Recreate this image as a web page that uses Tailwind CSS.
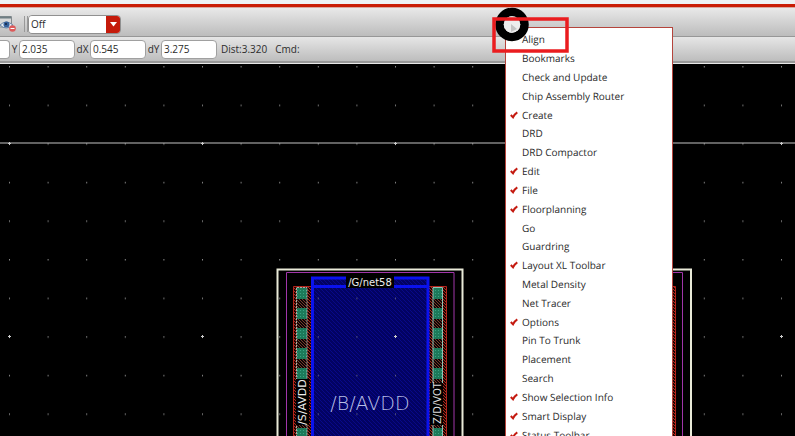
<!DOCTYPE html>
<html lang="en">
<head>
<meta charset="utf-8">
<title>Layout Editor</title>
<script src="https://cdn.jsdelivr.net/npm/@tailwindcss/browser@4"></script>
</head>
<body class="relative flex h-screen flex-col overflow-hidden bg-black font-['Open_Sans','Noto_Sans',sans-serif] text-[10px] leading-4 text-[#2c2c2c]">
<header class="shrink-0">
  <div class="h-1 bg-[#eef1f3]"></div>
  <div class="h-1 border-b border-[#d9a79f] bg-[#c91c05]"></div>
  <div class="flex h-[29px] items-center border-b border-[#979797] bg-linear-to-b from-[#e9e9e9] to-[#bcbcbc] pt-1">
    <button aria-label="Hide selected" class="h-[18px] w-4">
      <svg width="16" height="18" viewBox="0 0 16 18">
        <path d="M-2 1.500H11.500V12H-2Z" fill="#d8d8d8" stroke="#858b8e"/>
        <path d="M-2 2.500H11" stroke="#6f7e84" stroke-width="2"/>
        <path d="M0 10Q6 4 13 10Q6 16 0 10Z" fill="#e9eff6" stroke="#6b87a8"/>
        <circle cx="6.500" cy="9.500" r="3" fill="#35609b"/><circle cx="6" cy="9" r="1" fill="#14253f"/>
        <circle cx="12.500" cy="13.500" r="3.300" fill="#dc5b5b"/><path d="M10.500 13.500h4" stroke="#fff"/>
      </svg>
    </button>
    <span class="ml-2 h-4 w-1 border-x border-[#999]"></span>
    <label class="relative flex h-[19px] w-[93px] overflow-hidden rounded border border-[#909090] bg-white">
      <select aria-label="Snap mode" class="w-full appearance-none bg-white pl-0.5 outline-none"><option>Off</option></select>
      <span class="pointer-events-none absolute inset-y-0 right-0 flex w-[14px] items-center justify-center bg-[#c51a0a]">
        <svg width="7" height="5" viewBox="0 0 7 5"><path d="M0 0H7L3.500 4.500Z" fill="#fff"/></svg>
      </span>
    </label>
  </div>
  <div class="flex h-[26px] items-center border-b-2 border-[#989898] bg-linear-to-b from-[#e6e6e6] to-[#bdbdbd] whitespace-nowrap">
    <input aria-label="X" class="h-[19px] w-[10px] rounded-r border border-l-0 border-[#a0a0a0] bg-white">
    <label for="y" class="w-[9px] text-center">Y</label>
    <input id="y" value="2.035" class="h-[19px] w-14 rounded border border-[#a0a0a0] bg-white px-0.5">
    <label for="dx" class="w-[15px] text-center">dX</label>
    <input id="dx" value="0.545" class="h-[19px] w-14 rounded border border-[#a0a0a0] bg-white px-0.5">
    <label for="dy" class="w-[15px] text-center">dY</label>
    <input id="dy" value="3.275" class="h-[19px] w-14 rounded border border-[#a0a0a0] bg-white px-0.5">
    <span class="ml-1">Dist:3.320</span>
    <span class="ml-2">Cmd:</span>
  </div>
</header>

<main class="min-h-0 flex-1 border-t border-[#e8e8e8]">
  <svg class="block h-full w-full" aria-label="Layout canvas">
    <defs>
      <pattern id="dots" x="9" y="66" width="38.600" height="38.600" patternUnits="userSpaceOnUse"><rect width="1" height="1.500" fill="#8a8a8a"/></pattern>
      <pattern id="major" x="8" y="142" width="193" height="193" patternUnits="userSpaceOnUse"><path d="M1.500 0V3M0 1.500H3" stroke="#ccc" stroke-width="1"/></pattern>
      <pattern id="blue" width="4" height="4" patternUnits="userSpaceOnUse"><rect width="4" height="4" fill="#020262"/><path d="M0 0L4 4M-1 3L1 5M3 -1L5 1" stroke="#080888"/></pattern>
      <pattern id="red" width="3" height="3" patternUnits="userSpaceOnUse"><rect width="3" height="3" fill="#180402"/><path d="M0 0L3 3M-1 2L1 4M2 -1L4 1" stroke="#b0281c"/></pattern>
      <pattern id="rust" width="3" height="3" patternUnits="userSpaceOnUse"><rect width="3" height="3" fill="#0c0606"/><path d="M0 0L3 3M-1 2L1 4M2 -1L4 1" stroke="#7a3a2c"/></pattern>
      <pattern id="via" y="288" width="12" height="20" patternUnits="userSpaceOnUse"><rect width="12" height="11" fill="#1c7a5a"/><path d="M0 2.500H12M0 5.500H12M0 8.500H12" stroke="#3aa283" stroke-dasharray="1 2"/></pattern>
    </defs>
    <g transform="translate(0 -64)">
      <rect y="64" width="100%" height="100%" fill="url(#dots)"/>
      <path d="M0 143H4000" stroke="#c4c4c4"/>

      <path d="M277.500 500V269.500H462.500V500" fill="none" stroke="#e9ead8" stroke-width="2"/>
      <path d="M286.500 500V272.500H454V500" fill="none" stroke="#a136aa"/>
      <rect x="293" y="286" width="19" height="220" fill="url(#red)"/>
      <path d="M293.500 500V286.500H312" fill="none" stroke="#b3231b"/>
      <rect x="296" y="287" width="11" height="220" fill="url(#rust)"/>
      <rect x="297" y="288" width="10" height="220" fill="url(#via)"/>
      <path d="M296.500 500V287.500H307V500" fill="none" stroke="#9db3ac" stroke-dasharray="2 1"/>
      <rect x="429" y="286" width="18" height="220" fill="url(#red)"/>
      <path d="M446.500 500V286.500H429" fill="none" stroke="#b3231b"/>
      <rect x="433" y="287" width="10" height="220" fill="url(#rust)"/>
      <rect x="433" y="288" width="10" height="220" fill="url(#via)"/>
      <path d="M433 500V287.500H442.500V500" fill="none" stroke="#8ec4b6"/>
      <rect x="312" y="278" width="116" height="230" fill="url(#blue)"/>
      <path d="M312.500 500V278H428V500M312 286.500H428" fill="none" stroke="#0a12ee" stroke-width="3"/>
      <rect x="313" y="288" width="114" height="200" fill="url(#dots)" opacity="0.700"/>
      <rect x="346" y="276" width="48" height="12" fill="#000"/>
      <text x="370" y="286" text-anchor="middle" font-family="DejaVu Sans, sans-serif" font-size="10" fill="#eee">/G/net58</text>
      <text x="370" y="410" text-anchor="middle" font-family="DejaVu Sans, sans-serif" font-weight="200" font-size="19" fill="#b9bfe6">/B/AVDD</text>
      <rect x="296" y="379" width="13" height="46" fill="#000"/>
      <text transform="translate(306 425) rotate(-90)" font-family="DejaVu Sans, sans-serif" font-size="11" fill="#eee">/S/AVDD</text>
      <rect x="430" y="383" width="13" height="42" fill="#000"/>
      <text transform="translate(441 424) rotate(-90)" font-family="DejaVu Sans, sans-serif" font-size="10" fill="#ddd">Z/D/VOT</text>

      <path d="M506 500V269.500H691V500" fill="none" stroke="#e9ead8" stroke-width="2"/>
      <path d="M514 500V272.500H682.500V500" fill="none" stroke="#a136aa"/>
      <rect x="657" y="286" width="19" height="220" fill="url(#red)"/>
      <path d="M675.500 500V286.500H657" fill="none" stroke="#b3231b"/>
      <rect y="64" width="100%" height="100%" fill="url(#major)"/>
    </g>
  </svg>
</main>

<div role="menu" aria-label="Toolbars" class="absolute top-[27px] left-[505px] grid h-[418px] w-[168px] auto-rows-fr border border-[#b5443c] bg-white pt-0.5 text-[#2a2a2a]" id="menu"></div>
<svg class="pointer-events-none absolute top-0 left-[490px]" width="90" height="60" viewBox="0 0 90 60" aria-hidden="true">
  <circle cx="22" cy="24.500" r="12.500" fill="none" stroke="#000" stroke-width="8.500"/>
  <circle cx="22" cy="24.500" r="8.300" fill="#ededed"/>
  <path d="M21 24V32L27 29Z" fill="#c4c4c4"/>
  <rect x="4" y="19" width="73" height="32" fill="none" stroke="#ea1c1f" stroke-width="3.500"/>
</svg>
<script>
  const items = ["Align", "Bookmarks", "Check and Update", "Chip Assembly Router", "*Create", "DRD", "DRD Compactor", "*Edit", "*File", "*Floorplanning", "Go", "Guardring", "*Layout XL Toolbar", "Metal Density", "Net Tracer", "*Options", "Pin To Trunk", "Placement", "Search", "*Show Selection Info", "*Smart Display", "*Status Toolbar"];
  const check = '<svg width="8" height="8" viewBox="0 0 8 8"><path d="M0.800 4L3 6.300Q4.500 3 7.300 1.300" fill="none" stroke="#c41a10" stroke-width="2"/></svg>';
  document.getElementById("menu").innerHTML = items.map(t => {
    const on = t[0] === "*";
    return `<button role="menuitemcheckbox" aria-checked="${on}" class="flex min-h-0 items-center pl-1 text-left whitespace-nowrap [text-rendering:geometricPrecision]"><span class="w-3">${on ? check : ""}</span><span>${on ? t.slice(1) : t}</span></button>`;
  }).join("");
</script>
</body>
</html>
